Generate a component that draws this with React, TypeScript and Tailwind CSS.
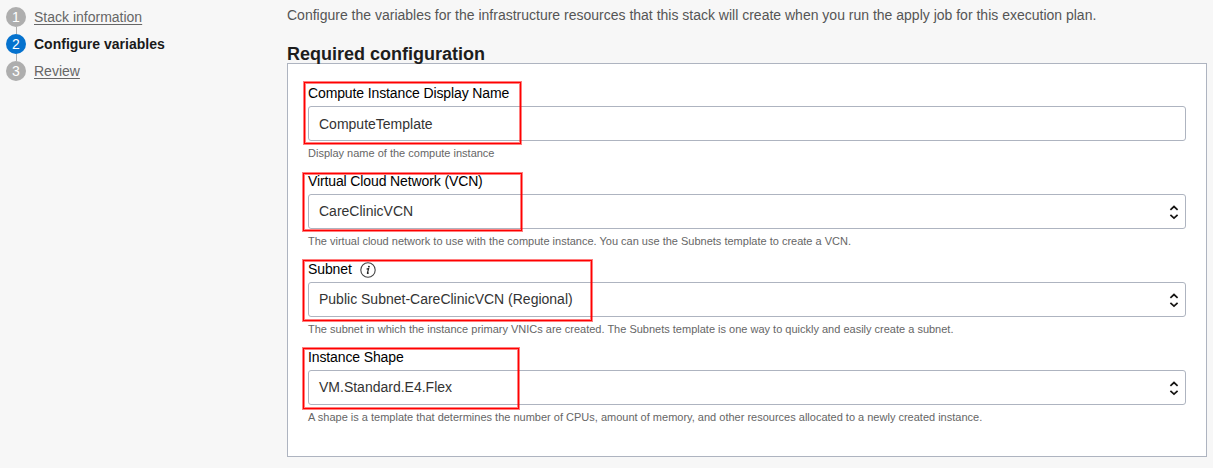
import type { ReactNode } from "react";

type FieldProps = {
  label: string;
  value: string;
  help: string;
  select?: boolean;
  info?: boolean;
  mark: string;
};

function Sorter() {
  return (
    <svg width="10" height="17" viewBox="0 0 10 17" fill="none" stroke="#161513" strokeWidth="1.7" className="shrink-0">
      <path d="M1.4 6.8 5 3.5l3.6 3.3" />
      <path d="M1.4 11.8 5 15.1l3.6-3.3" />
    </svg>
  );
}

function InfoIcon() {
  return (
    <svg width="16" height="16" viewBox="0 0 16 16" className="mt-0.5 ml-2 shrink-0">
      <circle cx="8" cy="8" r="7.2" fill="none" stroke="#444" strokeWidth="1.1" />
      <circle cx="8.9" cy="4.6" r="0.95" fill="#222" />
      <path d="M6.6 7.2 8.6 6.7 7.4 11.1c-.1.5.4.4 1.3-.3" fill="none" stroke="#222" strokeWidth="1.2" />
    </svg>
  );
}

function Field({ label, value, help, select, info, mark }: FieldProps) {
  return (
    <div className="relative flex h-[88px] flex-col">
      <div className="flex h-5 items-center text-[14px] leading-5 tracking-[-0.12px] text-black">
        <span>{label}</span>
        {info && <InfoIcon />}
      </div>
      <div className="mt-[3px] flex h-[35px] items-center justify-between rounded-[3px] border border-[#aeb4c0] bg-white pr-[6px] pl-[10px] text-[14px] text-[#333]">
        <span className={select ? "pb-[2px]" : ""}>{value}</span>
        {select && <Sorter />}
      </div>
      <p className="mt-[5px] text-[11px] leading-[14px] text-[#666]">{help}</p>
      <div className={`pointer-events-none absolute border border-[#ff0000] shadow-[0_0_0_1px_rgba(255,0,0,0.5),inset_0_0_0_1px_rgba(255,0,0,0.5)] ${mark}`} />
    </div>
  );
}

function Step({ n, active, children }: { n: number; active?: boolean; children: ReactNode }) {
  return (
    <li className="flex h-5 items-center gap-2">
      <span className={`flex size-5 items-center justify-center rounded-full text-[14px] text-white ${active ? "bg-[#0572ce]" : "bg-[#aeaeae]"}`}>{n}</span>
      {children}
    </li>
  );
}

export default function App() {
  return (
    <div className="flex h-[468px] w-[1213px] overflow-hidden bg-[#f7f7f7] font-['Liberation_Sans',Arial,sans-serif] text-[14px] leading-5">
      <nav className="w-[287px] shrink-0 pt-[7px] pl-[6px]">
        <ol className="flex flex-col">
          <Step n={1}><a className="text-[#666] underline underline-offset-2">Stack information</a></Step>
          <li className="ml-[10px] h-[7px] w-px bg-[#aeaeae]" />
          <Step n={2} active><span className="font-bold text-[#1a1a1a]">Configure variables</span></Step>
          <li className="ml-[10px] h-[7px] w-px bg-[#aeaeae]" />
          <Step n={3}><a className="text-[#666] underline underline-offset-2">Review</a></Step>
        </ol>
      </nav>
      <main className="w-[920px] shrink-0 pt-[5px]">
        <p className="whitespace-nowrap text-[#555]">Configure the variables for the infrastructure resources that this stack will create when you run the apply job for this execution plan.</p>
        <h1 className="mt-[18px] h-5 text-[18px] leading-[23px] font-bold text-[#1d1d1d]">Required configuration</h1>
        <section className="h-[394px] border border-[#aeb4c0] bg-white px-5 pt-[19px]">
          <Field label="Compute Instance Display Name" value="ComputeTemplate" help="Display name of the compute instance" mark="-left-[4px] -top-[1px] h-[62px] w-[217px]" />
          <Field select label="Virtual Cloud Network (VCN)" value="CareClinicVCN" help="The virtual cloud network to use with the compute instance. You can use the Subnets template to create a VCN." mark="-left-[5px] top-[2px] h-[58px] w-[219px]" />
          <Field select info label="Subnet" value="Public Subnet-CareClinicVCN (Regional)" help="The subnet in which the instance primary VNICs are created. The Subnets template is one way to quickly and easily create a subnet." mark="-left-[5px] top-px h-[61px] w-[289px]" />
          <Field select label="Instance Shape" value="VM.Standard.E4.Flex" help="A shape is a template that determines the number of CPUs, amount of memory, and other resources allocated to a newly created instance." mark="-left-[5px] top-px h-[61px] w-[216px]" />
        </section>
      </main>
    </div>
  );
}
